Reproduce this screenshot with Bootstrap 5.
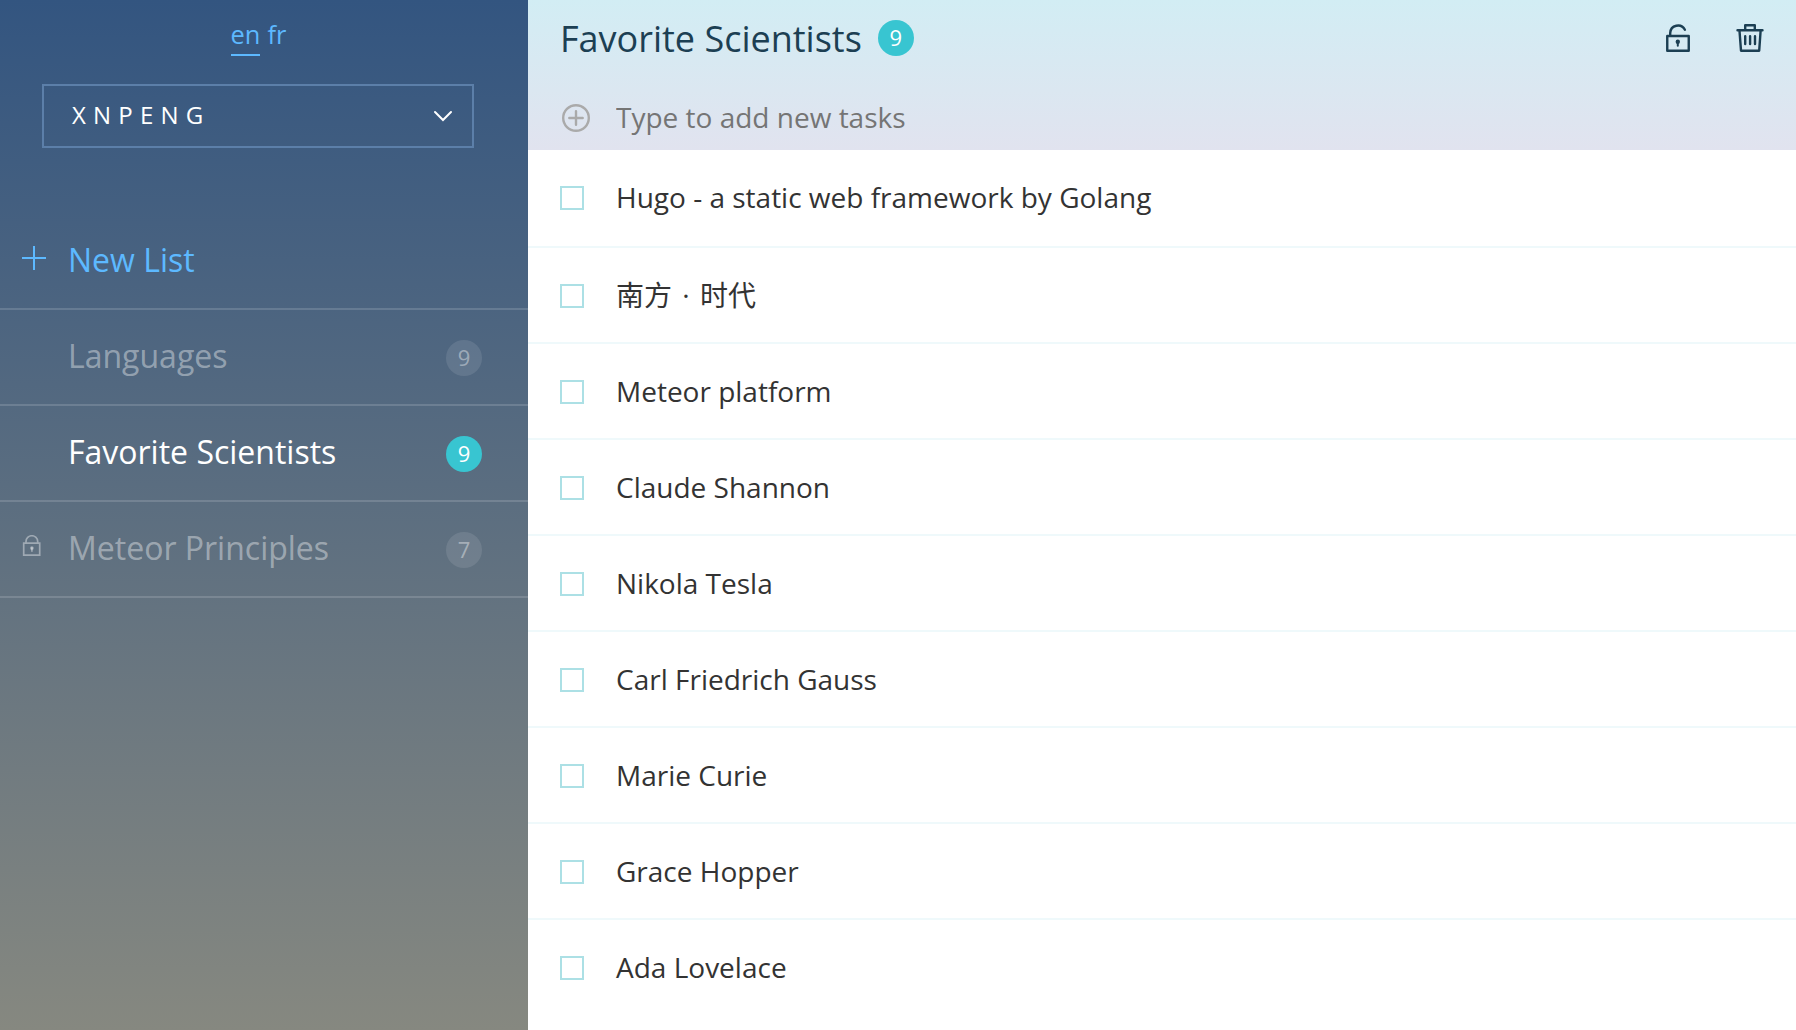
<!DOCTYPE html>
<html lang="en">
<head>
<meta charset="utf-8">
<meta name="viewport" content="width=device-width, initial-scale=1">
<title>Todos - Favorite Scientists</title>
<link rel="stylesheet" href="https://cdn.jsdelivr.net/npm/bootstrap@5.3.0/dist/css/bootstrap.min.css">
<style>
body{font-family:"Open Sans","Noto Sans CJK SC",sans-serif;font-size:28px;line-height:40px;color:#333;background:#fff}
a{text-decoration:none}
.side-menu{width:528px;background:linear-gradient(#335580,#868880)}
.lang-switch{height:84px;padding:16px 11px 0 0;font-size:25.400px;line-height:36px;gap:7px}
.lang-switch a{color:#5db9ff;height:40px}
.lang-switch a.current{border-bottom:2px solid #5db9ff}
.user-btn{margin:0 54px 0 42px;height:64px;border:2px solid #5c7fa9;border-radius:0;color:#fff;font-size:24px;letter-spacing:7.2px;padding:0 19px 0 28px;line-height:36px}
.user-btn span{padding-bottom:2px}
.lists{margin-top:66px}
.list-row{height:96px;border-bottom:2px solid rgba(255,255,255,.15);padding:0 46px 0 21px;font-size:32px;color:rgba(255,255,255,.4)}
.list-row .glyph{width:47px;flex:none;padding-bottom:6px}
.list-row .list-name{padding-bottom:2px}
.list-row .pill{margin-top:2px}
.list-row.active{color:#fff}
.list-row.create{color:#5db9ff}
.pill{width:36px;height:36px;font-size:22px;line-height:35px;background:rgba(255,255,255,.1);flex:none}
.pill.on{background:#38c5d1;color:#fff}
.list-head{height:150px;background:linear-gradient(#d2edf4,#e1e3ef);color:#1c3f53}
.head-top{height:76px;padding:0 32px}
.head-top h1{font-size:36px;font-weight:400;margin:0;padding-top:2px;line-height:50px}
.head-tools{gap:45px}
.new-task{height:74px;padding:10px 32px 0}
.new-task input{border:0;background:none;outline:0;font-size:28px;padding:0 0 2px;width:700px;line-height:40px}
.new-task input::placeholder{color:#757575;opacity:1}
.task{height:96px;padding:2px 32px 0;border-bottom:2px solid #eff9fb}
.task:first-child{height:98px;padding-top:0}
.task:last-child{border-color:transparent}
.box{width:24px;height:24px;border:2px solid #ace0e5;margin-right:32px;flex:none;appearance:none;background:#fff}
.task span{padding-bottom:2px}
.task span:lang(zh){word-spacing:3px}
</style>
<script src="https://cdn.jsdelivr.net/npm/bootstrap@5.3.0/dist/js/bootstrap.bundle.min.js"></script>
</head>
<body>
<div class="d-flex vh-100 overflow-hidden">
  <aside class="side-menu flex-shrink-0 d-flex flex-column">
    <div class="lang-switch d-flex justify-content-center"><a class="current" href="#">en</a><a href="#">fr</a></div>
    <a class="user-btn d-flex align-items-center justify-content-between" href="#"><span>XNPENG</span>
      <svg width="20" height="12" viewBox="0 0 20 12" fill="none" stroke="#fff" stroke-width="2" stroke-linecap="round"><path d="M2 2l8 8 8-8"/></svg></a>
    <nav class="lists">
      <a class="list-row create d-flex align-items-center" href="#"><span class="glyph d-flex"><svg width="25" height="24" viewBox="0 0 25 24" fill="none" stroke="currentColor" stroke-width="2"><path d="M1 12h24M13 0v24"/></svg></span><span class="list-name">New List</span></a>
      <a class="list-row d-flex align-items-center" href="#"><span class="glyph"></span><span class="list-name flex-grow-1">Languages</span><span class="pill rounded-circle text-center">9</span></a>
      <a class="list-row active d-flex align-items-center" href="#"><span class="glyph"></span><span class="list-name flex-grow-1">Favorite Scientists</span><span class="pill on rounded-circle text-center">9</span></a>
      <a class="list-row d-flex align-items-center" href="#"><span class="glyph d-flex"><svg width="22" height="22" viewBox="0 0 22 22" fill="none" stroke="currentColor" stroke-width="1.700"><path d="M2.700 8.200h16v12h-16zM5 8.200V6.600a5.850 5.850 0 0 1 11.700 0v1.600"/><path d="M10.900 12.200v4.500"/><circle cx="10.900" cy="13" r="1"/></svg></span><span class="list-name flex-grow-1">Meteor Principles</span><span class="pill rounded-circle text-center">7</span></a>
    </nav>
  </aside>
  <main class="flex-grow-1">
    <header class="list-head">
      <div class="head-top d-flex align-items-center">
        <h1>Favorite Scientists</h1><span class="pill on rounded-circle text-center ms-3">9</span>
        <div class="head-tools ms-auto d-flex">
          <svg width="26" height="30" viewBox="0 0 26 30" fill="none" stroke="currentColor" stroke-width="2.400" stroke-linejoin="round" stroke-linecap="round"><path d="M2.250 13h21.500v14.700H2.250zM5.200 12.500V10a7.800 7.800 0 0 1 14.700-3.300"/><path d="M12.800 18.500v4.300" stroke-width="2"/><circle cx="12.800" cy="18.800" r="1"/></svg>
          <svg width="28" height="30" viewBox="0 0 28 30" fill="none" stroke="currentColor" stroke-width="2.400" stroke-linejoin="round" stroke-linecap="round"><path d="M1.500 7.200h25M3.500 7.800L5 27.700h18.200l1.400-19.900M9.200 7V2.200h9.600V7M9.200 13.200v7.800M14.100 13.200v7.800M19 13.200v7.800"/></svg>
        </div>
      </div>
      <div class="new-task d-flex align-items-center">
        <svg width="32" height="28" viewBox="0 0 32 28" fill="none" stroke="#aaa" stroke-width="2.400"><circle cx="16" cy="14" r="12.800"/><path d="M9.300 14h13.400M16 7.300v13.400" stroke-linecap="round"/></svg>
        <input class="ms-4" type="text" placeholder="Type to add new tasks">
      </div>
    </header>
    <section>
      <div class="task d-flex align-items-center"><input type="checkbox" class="box"><span>Hugo - a static web framework by Golang</span></div>
      <div class="task d-flex align-items-center"><input type="checkbox" class="box"><span lang="zh">南方 · 时代</span></div>
      <div class="task d-flex align-items-center"><input type="checkbox" class="box"><span>Meteor platform</span></div>
      <div class="task d-flex align-items-center"><input type="checkbox" class="box"><span>Claude Shannon</span></div>
      <div class="task d-flex align-items-center"><input type="checkbox" class="box"><span>Nikola Tesla</span></div>
      <div class="task d-flex align-items-center"><input type="checkbox" class="box"><span>Carl Friedrich Gauss</span></div>
      <div class="task d-flex align-items-center"><input type="checkbox" class="box"><span>Marie Curie</span></div>
      <div class="task d-flex align-items-center"><input type="checkbox" class="box"><span>Grace Hopper</span></div>
      <div class="task d-flex align-items-center"><input type="checkbox" class="box"><span>Ada Lovelace</span></div>
    </section>
  </main>
</div>
</body>
</html>
